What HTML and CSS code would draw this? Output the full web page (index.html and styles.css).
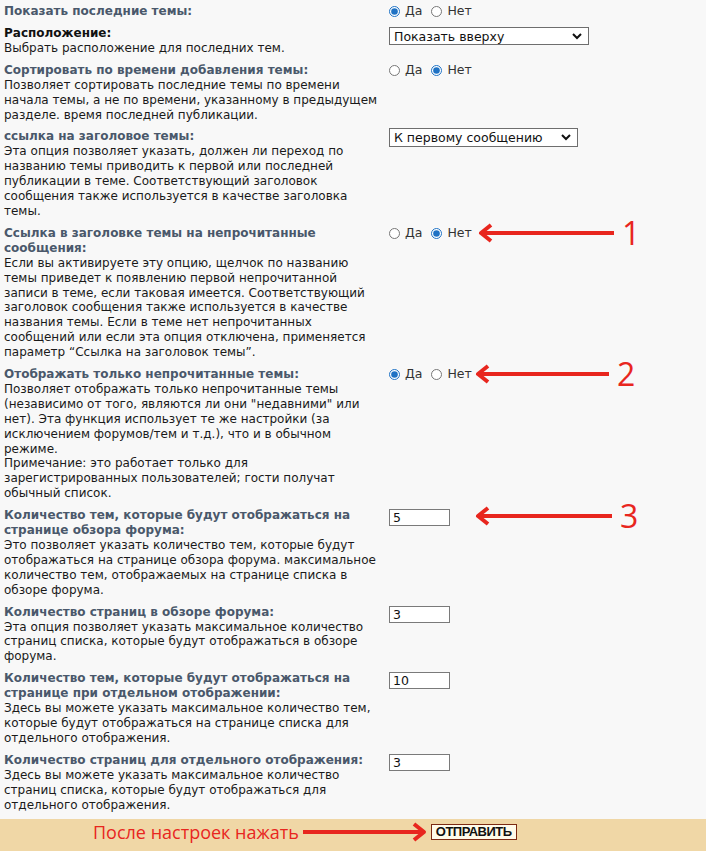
FILE: index.html
```html
<!DOCTYPE html>
<html lang="ru">
<head>
    <meta charset="UTF-8">
    <title>Настройки отображения тем</title>
    <link rel="stylesheet" href="styles.css">
</head>
<body>

<form class="prefs">
    <!-- Последние темы -->
    <div class="opt">
        <div class="opt-text">
            <span class="opt-title">Показать последние темы:</span>
        </div>
        <div class="opt-ctl">
            <label class="yn"><input type="radio" name="recent" checked> Да</label>
            <label class="yn"><input type="radio" name="recent"> Нет</label>
        </div>
    </div>

    <div class="opt">
        <div class="opt-text">
            <span class="opt-title dark">Расположение:</span>
            Выбрать расположение для последних тем.
        </div>
        <div class="opt-ctl">
            <select class="sel sel-wide">
                <option>Показать вверху</option>
                <option>Показать внизу</option>
            </select>
        </div>
    </div>

    <div class="opt">
        <div class="opt-text">
            <span class="opt-title">Сортировать по времени добавления темы:</span>
            Позволяет сортировать последние темы по времени начала темы, а не по времени, указанному в предыдущем разделе. время последней публикации.
        </div>
        <div class="opt-ctl">
            <label class="yn"><input type="radio" name="sort"> Да</label>
            <label class="yn"><input type="radio" name="sort" checked> Нет</label>
        </div>
    </div>

    <div class="opt">
        <div class="opt-text">
            <span class="opt-title">ссылка на заголовое темы:</span>
            Эта опция позволяет указать, должен ли переход по названию темы приводить к первой или последней публикации в теме. Соответствующий заголовок сообщения также используется в качестве заголовка темы.
        </div>
        <div class="opt-ctl">
            <select class="sel sel-mid">
                <option>К первому сообщению</option>
                <option>К последнему сообщению</option>
            </select>
        </div>
    </div>

    <div class="opt">
        <div class="opt-text">
            <span class="opt-title">Ссылка в заголовке темы на непрочитанные сообщения:</span>
            Если вы активируете эту опцию, щелчок по названию темы приведет к появлению первой непрочитанной записи в теме, если таковая имеется. Соответствующий заголовок сообщения также используется в качестве названия темы. Если в теме нет непрочитанных сообщений или если эта опция отключена, применяется параметр “Ссылка на заголовок темы”.
        </div>
        <div class="opt-ctl">
            <label class="yn"><input type="radio" name="unread"> Да</label>
            <label class="yn"><input type="radio" name="unread" checked> Нет</label>
        </div>
        <div class="mark mark-1">
            <svg width="136" height="20" viewBox="0 0 136 20"><path d="M3,10 H136 M13,2 L3,10 L13,18" /></svg>
            <span class="mark-num">1</span>
        </div>
    </div>

    <div class="opt">
        <div class="opt-text">
            <span class="opt-title">Отображать только непрочитанные темы:</span>
            Позволяет отображать только непрочитанные темы (независимо от того, являются ли они "недавними" или нет). Эта функция использует те же настройки (за исключением форумов/тем и т.д.), что и в обычном режиме.<br>
            Примечание: это работает только для зарегистрированных пользователей; гости получат обычный список.
        </div>
        <div class="opt-ctl">
            <label class="yn"><input type="radio" name="only" checked> Да</label>
            <label class="yn"><input type="radio" name="only"> Нет</label>
        </div>
        <div class="mark">
            <svg width="134" height="20" viewBox="0 0 134 20"><path d="M3,10 H134 M13,2 L3,10 L13,18" /></svg>
            <span class="mark-num">2</span>
        </div>
    </div>

    <div class="opt">
        <div class="opt-text">
            <span class="opt-title">Количество тем, которые будут отображаться на странице обзора форума:</span>
            Это позволяет указать количество тем, которые будут отображаться на странице обзора форума. максимальное количество тем, отображаемых на странице списка в обзоре форума.
        </div>
        <div class="opt-ctl">
            <input class="num" type="text" value="5">
        </div>
        <div class="mark mark-3">
            <svg width="137" height="20" viewBox="0 0 137 20"><path d="M3,10 H137 M13,2 L3,10 L13,18" /></svg>
            <span class="mark-num">3</span>
        </div>
    </div>

    <div class="opt">
        <div class="opt-text">
            <span class="opt-title">Количество страниц в обзоре форума:</span>
            Эта опция позволяет указать максимальное количество страниц списка, которые будут отображаться в обзоре форума.
        </div>
        <div class="opt-ctl">
            <input class="num" type="text" value="3">
        </div>
    </div>

    <div class="opt">
        <div class="opt-text">
            <span class="opt-title">Количество тем, которые будут отображаться на странице при отдельном отображении:</span>
            Здесь вы можете указать максимальное количество тем, которые будут отображаться на странице списка для отдельного отображения.
        </div>
        <div class="opt-ctl">
            <input class="num" type="text" value="10">
        </div>
    </div>

    <div class="opt">
        <div class="opt-text">
            <span class="opt-title">Количество страниц для отдельного отображения:</span>
            Здесь вы можете указать максимальное количество страниц списка, которые будут отображаться для отдельного отображения.
        </div>
        <div class="opt-ctl">
            <input class="num" type="text" value="3">
        </div>
    </div>

    <!-- Кнопка отправки -->
    <div class="submit-bar">
        <span class="hint">После настроек нажать</span>
        <svg class="hint-arrow" width="124" height="20" viewBox="0 0 124 20"><path d="M0,10 H121 M111,2 L121,10 L111,18" /></svg>
        <button type="button" class="btn">ОТПРАВИТЬ</button>
    </div>
</form>

</body>
</html>
```

FILE: styles.css
```css
body {
    margin: 0;
    background-color: #f8f8f8;
    font-family: "DejaVu Sans", Verdana, sans-serif;
    font-size: 12px;
    color: #1a1a1a;
}
.prefs {
    margin: 0;
}
.opt {
    position: relative;
    display: grid;
    grid-template-columns: 385px 1fr;
    padding: 4px 0 3px 4px;
    line-height: 14.9px;
}
.opt-text {
    padding-right: 9px;
}
.opt-title {
    display: block;
    font-weight: bold;
    color: #4a586b; /* серо-синие заголовки */
}
.opt-title.dark {
    color: #111;
}
.opt-ctl {
    display: flex;
    align-items: flex-start;
}
.yn {
    display: flex;
    align-items: center;
    height: 15px;
    margin-right: 9px;
    font-size: 12.5px;
    color: #333;
}
.yn input {
    width: 11px;
    height: 11px;
    margin: 0 5px 0 0;
    accent-color: #1f72c4;
}
.sel {
    appearance: none;
    height: 18px;
    margin-top: 1px;
    padding: 0 4px;
    border: 1px solid #6e6e6e;
    border-radius: 0;
    background: #fff url("data:image/svg+xml,%3Csvg xmlns='http://www.w3.org/2000/svg' width='10' height='7'%3E%3Cpath d='M1,1 L5,5 L9,1' fill='none' stroke='%23111' stroke-width='2'/%3E%3C/svg%3E") no-repeat right 6px center;
    font-family: "DejaVu Sans", Verdana, sans-serif;
    font-size: 12.5px;
    color: #111;
}
.sel-wide {
    width: 200px;
}
.sel-mid {
    width: 189px;
    height: 19px;
    margin-top: -1px;
}
.num {
    box-sizing: border-box;
    width: 61px;
    height: 17px;
    margin-top: 1px;
    padding: 0 3px;
    border: 1px solid #7a7a7a;
    border-radius: 0;
    background: #fff;
    font-family: "DejaVu Sans", Verdana, sans-serif;
    font-size: 12.5px;
    color: #111;
}

/* красные пометки со стрелками */
.mark {
    position: absolute;
    left: 475px;
    top: 1px;
    display: flex;
    align-items: center;
    gap: 8px;
}
.mark-1 {
    left: 478px;
}
.mark-3 {
    top: 2px;
}
.mark svg path,
.hint-arrow path {
    fill: none;
    stroke: #e8261e;
    stroke-width: 4;
    stroke-linejoin: round;
}
.mark-num {
    font-family: "Open Sans", "Liberation Sans", sans-serif;
    font-size: 32px;
    line-height: 20px;
    color: #e8261e;
}

.submit-bar {
    display: flex;
    align-items: flex-start;
    height: 40px;
    margin-top: 4px;
    padding: 3px 0 0 93px;
    box-sizing: border-box;
    background-color: #f0d7a6;
}
.hint {
    font-family: "Open Sans", "Liberation Sans", sans-serif;
    font-size: 18px;
    line-height: 20px;
    color: #e8261e;
}
.hint-arrow {
    margin-left: 4px;
}
.btn {
    height: 16px;
    margin: 2px 0 0 4px;
    padding: 0 4px;
    border: 1px solid #7b2a12;
    background-color: #fffbea;
    font-family: "Liberation Sans", Arial, sans-serif;
    font-size: 13px;
    font-weight: bold;
    letter-spacing: -0.5px;
    line-height: 14px;
    color: #111;
}
```
